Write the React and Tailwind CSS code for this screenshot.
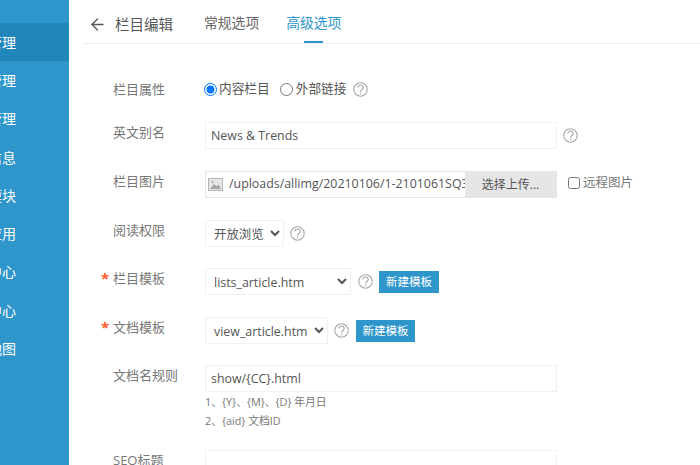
import React from "react";
import { ArrowLeft } from "lucide-react";

const font = "font-['Open_Sans','Noto_Sans_CJK_SC',sans-serif]";

function Help({ className = "" }) {
  return (
    <svg width="15" height="15" viewBox="0 0 15 15" fill="none" stroke="#aaaaaa" className={"shrink-0 " + className}>
      <circle cx="7.5" cy="7.5" r="6.7" strokeWidth="1.1" />
      <path d="M4.8 5.6C4.8 4 6 3 7.5 3S10.2 4 10.2 5.5C10.2 7.4 7.6 7.6 7.6 9.8" strokeWidth="1.2" />
      <path d="M7.6 10.8V12.2" strokeWidth="1.2" />
    </svg>
  );
}

function Row({ label, required, top, children }) {
  return (
    <div className="flex items-start pl-[32px]" style={{ marginTop: top }}>
      <span className="w-[12px] shrink-0 text-[#ff5a1f] text-[15px] leading-[20px] font-bold">{required ? "*" : ""}</span>
      <span className="w-[92px] shrink-0 text-[13px] leading-[20px] text-[#777]">{label}</span>
      <div className="flex-1 min-w-0">{children}</div>
    </div>
  );
}

const selectCls = "h-[27px] border border-[#f0f0f0] bg-white text-[12.4px] text-[#555] pl-[4px] pt-[1px] outline-none";
const btnCls = "h-[22px] flex items-center justify-center bg-[#2e96cb] text-white text-[11.5px]";

export default function App() {
  const nav = ["内容管理", "栏目管理", "文档管理", "基本信息", "频道模块", "插件应用", "会员中心", "系统中心", "网站地图"];
  return (
    <div className={"flex h-[465px] w-[700px] overflow-hidden bg-white " + font}>
      <aside className="w-[69px] shrink-0 h-full overflow-hidden bg-[#2e96cb] pt-[23px]">
        {nav.map((t, i) => (
          <div
            key={i}
            className={"h-[38.3px] flex items-center justify-end pr-[53px] whitespace-nowrap text-[14px] text-white " + (i === 0 ? "bg-[#2187bb]" : "")}
          >
            {t}
          </div>
        ))}
      </aside>
      <main className="flex-1 min-w-0 h-full overflow-hidden">
        <header className="ml-[14px] h-[44px] border-b border-[#eeeeee] flex items-start">
          <ArrowLeft size={19} strokeWidth={1.6} className="text-[#555] mt-[15px] ml-[5px]" />
          <h1 className="ml-[8px] mt-[14px] text-[14.5px] leading-[22px] text-[#555] font-normal">栏目编辑</h1>
          <span className="ml-[31px] mt-[13px] text-[13.8px] leading-[20px] text-[#666]">常规选项</span>
          <span className="relative ml-[27px] mt-[13px] h-[30px] text-[13.8px] leading-[20px] text-[#2e96cb]">
            高级选项
            <span className="absolute left-[18px] bottom-0 w-[19px] h-[2px] bg-[#2e96cb]"></span>
          </span>
        </header>

        <Row label="栏目属性" top={35}>
          <div className="flex items-center h-[20px] text-[12.7px] text-[#555]">
            <input type="radio" name="attr" defaultChecked className="m-0 -ml-[1px] w-[13px] h-[13px]" />
            <span className="ml-[2px]">内容栏目</span>
            <input type="radio" name="attr" className="m-0 ml-[10px] w-[13px] h-[13px]" />
            <span className="ml-[3px]">外部链接</span>
            <Help className="ml-[6px]" />
          </div>
        </Row>

        <Row label="英文别名" top={23}>
          <div className="flex items-center">
            <input readOnly value="News & Trends" className="w-[352px] h-[27px] border border-[#f0f0f0] px-[5px] text-[12.4px] text-[#555] outline-none" />
            <Help className="ml-[6px]" />
          </div>
        </Row>

        <Row label="栏目图片" top={22}>
          <div className="flex items-start">
            <div className="w-[352px] h-[27px] border border-[#e5e5e5] flex items-center overflow-hidden">
              <svg width="15" height="13" viewBox="0 0 15 13" className="ml-[2px] shrink-0">
                <rect x="0.5" y="0.5" width="14" height="12" fill="#e6e6e6" stroke="#b5b5b5" />
                <path d="M2 11L6 6L8.5 8.5L10.5 6.5L13 11Z" fill="#a5a5a5" />
                <circle cx="4.5" cy="4" r="1.2" fill="#bbbbbb" />
              </svg>
              <span className="ml-[6px] w-[238px] overflow-hidden whitespace-nowrap text-[12.4px] text-[#555]">/uploads/allimg/20210106/1-2101061SQ3</span>
              <span className="ml-auto w-[91px] h-full shrink-0 flex items-center justify-center bg-[#e6e6e6] text-[12px] text-[#555]">选择上传...</span>
            </div>
            <label className="ml-[11px] flex items-center h-[24px] text-[12.5px] text-[#777]">
              <input type="checkbox" className="m-0 w-[12px] h-[12px]" />
              <span className="ml-[3px]">远程图片</span>
            </label>
          </div>
        </Row>

        <Row label="阅读权限" top={22}>
          <div className="flex items-center">
            <select className={selectCls + " w-[79px]"}><option>开放浏览</option></select>
            <Help className="ml-[6px]" />
          </div>
        </Row>

        <Row label="栏目模板" required top={21}>
          <div className="flex items-center">
            <select className={selectCls + " w-[146px]"}><option>lists_article.htm</option></select>
            <Help className="ml-[7px]" />
            <span className={btnCls + " w-[60px] ml-[6px]"}>新建模板</span>
          </div>
        </Row>

        <Row label="文档模板" required top={22}>
          <div className="flex items-center">
            <select className={selectCls + " w-[123px]"}><option>view_article.htm</option></select>
            <Help className="ml-[6px]" />
            <span className={btnCls + " w-[59px] ml-[7px]"}>新建模板</span>
          </div>
        </Row>

        <Row label="文档名规则" top={21}>
          <input readOnly value="show/{CC}.html" className="block w-[352px] h-[27px] border border-[#f0f0f0] px-[5px] text-[12.4px] text-[#555] outline-none" />
          <p className="mt-[0px] text-[10.8px] leading-[19px] text-[#777]">1、{"{Y}"}、{"{M}"}、{"{D}"} 年月日</p>
          <p className="text-[10.8px] leading-[19px] text-[#777]">2、{"{aid}"} 文档ID</p>
        </Row>

        <Row label="SEO标题" top={20}>
          <input readOnly className="block w-[352px] h-[27px] border border-[#f0f0f0] px-[5px] outline-none" />
        </Row>
      </main>
    </div>
  );
}
